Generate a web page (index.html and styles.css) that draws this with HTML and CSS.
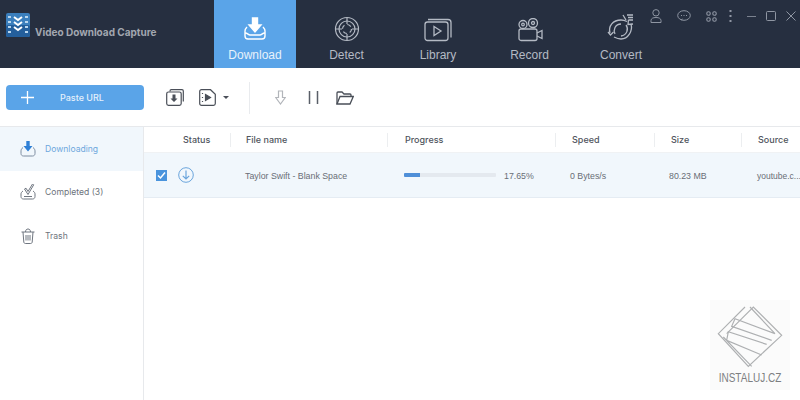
FILE: index.html
```html
<!DOCTYPE html>
<html lang="en">
<head>
<meta charset="utf-8">
<title>Video Download Capture</title>
<link rel="stylesheet" href="styles.css">
</head>
<body>
<div class="app">
  <header class="topbar">
    <div class="brand">
      <svg class="logo" width="24" height="24" viewBox="0 0 24 24">
        <rect x="0" y="0" width="24" height="24" rx="2" fill="#3b7fbd"/>
        <rect x="0" y="12" width="24" height="12" rx="2" fill="#245f9c"/>
        <path d="M2 4h3M2 9h3M2 14h3M2 19h3M19 4h3M19 9h3M19 14h3M19 19h3" stroke="#b9d6ee" stroke-width="2"/>
        <path d="M8 4l4 3 4-3M8 9l4 3 4-3M8 14l4 3 4-3" fill="none" stroke="#fff" stroke-width="2"/>
      </svg>
      <span class="brand-name">Video Download Capture</span>
    </div>
    <nav class="tabs">
      <div class="tab active">
        <svg width="26" height="26" viewBox="0 0 26 26" fill="none" stroke="#fff" stroke-width="1.4">
          <path d="M10.5 2h5v7h3.5l-6 7-6-7h3.500z" fill="#fff"/>
          <path d="M5 11c-1 1-2 2-2 4v5c0 2 1 3 3 3h14c2 0 3-1 3-3v-5c0-2-1-3-2-4"/>
          <path d="M3 17c3 0 3 2 5 2h10c2 0 2-2 5-2"/>
        </svg>
        <span>Download</span>
      </div>
      <div class="tab">
        <svg width="26" height="26" viewBox="0 0 26 26" fill="none" stroke="#b4bac4" stroke-width="1.2">
          <circle cx="13" cy="13" r="11.500"/>
          <circle cx="13" cy="13" r="8"/>
          <circle cx="13" cy="13" r="4.500" stroke-dasharray="4 3"/>
          <path d="M13 2v6M13 18v6M2 13h6M18 13h6"/>
        </svg>
        <span>Detect</span>
      </div>
      <div class="tab">
        <svg width="28" height="24" viewBox="0 0 28 24" fill="none" stroke="#b4bac4" stroke-width="1.300">
          <path d="M4 1.500h20c1.500 0 3 1 3 3v15"/>
          <rect x="1" y="4" width="23" height="18.500" rx="2.500"/>
          <path d="M10 8.500l7 4.500-7 4.500z"/>
        </svg>
        <span>Library</span>
      </div>
      <div class="tab">
        <svg width="26" height="24" viewBox="0 0 26 24" fill="none" stroke="#b4bac4" stroke-width="1.300">
          <circle cx="6" cy="6.500" r="4"/>
          <circle cx="6" cy="6.500" r="1.300"/>
          <circle cx="16" cy="5" r="4.500"/>
          <circle cx="16" cy="5" r="1.500"/>
          <rect x="2" y="11" width="18" height="11.500" rx="2"/>
          <path d="M20 15l5-2.500v8l-5-2.500"/>
        </svg>
        <span>Record</span>
      </div>
      <div class="tab">
        <svg width="28" height="28" viewBox="0 0 28 28" fill="none" stroke="#b4bac4" stroke-width="1.300">
          <path d="M3 19C1 12 6 6 14 6c2 0 4 .5 6 1.500"/>
          <path d="M24 10c2 7-3 15-10 15-3 0-5-1-7-2"/>
          <path d="M8 20c-2-4 0-10 6-10M19 11c3 4 1 10-5 11"/>
          <path d="M1 18l2.500 3 3-3M26 10l-5 .5.5-5"/>
          <path d="M16 1l3 5M20 1h6M21 3.500h5M22 6h4"/>
        </svg>
        <span>Convert</span>
      </div>
    </nav>
    <div class="window-controls">
      <svg width="12" height="14" viewBox="0 0 12 14" fill="none" stroke="#8f96a3" stroke-width="1"><circle cx="6" cy="3.800" r="3.200"/><path d="M1 13.500v-2C1 9.500 3 8.500 6 8.500s5 1 5 3v2z"/></svg>
      <svg class="ctl-chat" width="14" height="12" viewBox="0 0 14 12" fill="none" stroke="#8f96a3" stroke-width="1"><ellipse cx="7" cy="5.500" rx="6.300" ry="4.800"/><path d="M4 5.500h1M6.500 5.500h1M9 5.500h1M4 10l1.500-1"/></svg>
      <svg class="ctl-apps" width="11" height="11" viewBox="0 0 11 11" fill="none" stroke="#8f96a3" stroke-width="1.100"><rect x=".8" y=".8" width="3.400" height="3.400" rx="1.500"/><rect x="6.800" y=".8" width="3.400" height="3.400" rx="1.500"/><rect x=".8" y="6.800" width="3.400" height="3.400" rx="1.500"/><rect x="6.800" y="6.800" width="3.400" height="3.400" rx="1.500"/></svg>
      <svg class="ctl-more" width="3" height="12" viewBox="0 0 3 12" fill="#8f96a3"><rect x=".5" y="0" width="2" height="2"/><rect x=".5" y="5" width="2" height="2"/><rect x=".5" y="10" width="2" height="2"/></svg>
      <svg class="ctl-min" width="9" height="1" viewBox="0 0 9 1"><rect width="9" height="1" fill="#7b828f"/></svg>
      <svg class="ctl-max" width="10" height="10" viewBox="0 0 10 10" fill="none" stroke="#8f96a3"><rect x=".5" y=".5" width="9" height="9" rx="1"/></svg>
      <svg class="ctl-close" width="10" height="10" viewBox="0 0 10 10" fill="none" stroke="#8f96a3"><path d="M.5.500l9 9M9.500.500l-9 9"/></svg>
    </div>
  </header>

  <section class="toolbar">
    <button class="paste" type="button">
      <svg width="13" height="13" viewBox="0 0 13 13" stroke="#fff" stroke-width="1.300"><path d="M6.500 0v13M0 6.500h13"/></svg>
      <span>Paste URL</span>
    </button>
    <div class="tools-left">
      <svg width="18" height="17" viewBox="0 0 18 17" fill="none" stroke="#4a4f58" stroke-width="1.200">
        <path d="M4 2.500V2c0-.8.500-1.300 1.300-1.300H16c.8 0 1.300.5 1.300 1.300v10.500"/>
        <rect x=".7" y="3" width="14.500" height="13.300" rx="1.800"/>
        <path d="M6.500 5.500h3v4h2l-3.500 3.500-3.500-3.500h2z" fill="#4a4f58" stroke="none"/>
      </svg>
      <svg width="17" height="17" viewBox="0 0 17 17" fill="none" stroke="#4a4f58" stroke-width="1.200">
        <path d="M2.500.7h9l4.800 4.500v9.300c0 1-.8 1.800-1.800 1.800h-12c-1 0-1.800-.8-1.800-1.800V2.500c0-1 .8-1.800 1.800-1.800z"/>
        <path d="M6.500 5.500l5 3-5 3z" fill="#4a4f58"/>
        <path d="M3.500 4v1M3.500 8v1M3.500 12v1"/>
      </svg>
      <span class="caret"></span>
    </div>
    <div class="divider"></div>
    <div class="tools-right">
      <svg width="11" height="15" viewBox="0 0 11 15" fill="none" stroke="#b2b5ba" stroke-width="1.200"><path d="M3.500 1h4v6.500h2.800L5.500 14 .7 7.500h2.800z"/></svg>
      <svg class="pause" width="11" height="13" viewBox="0 0 11 13" stroke="#5a5f68" stroke-width="1.500"><path d="M1.500 0v13M9.500 0v13"/></svg>
      <svg class="folder" width="18" height="14" viewBox="0 0 18 14" fill="none" stroke="#4a4f58" stroke-width="1.300"><path d="M1 13V2c0-.6.400-1 1-1h4l2 2h6c.6 0 1 .4 1 1v1.500"/><path d="M1 13l3-7.500h13.300L14 13z"/></svg>
    </div>
  </section>

  <main class="content">
    <aside class="sidebar">
      <div class="side-item selected">
        <svg width="16" height="16" viewBox="0 0 16 16" fill="none" stroke="#7d8ca0" stroke-width="1"><path d="M6.300 0h3.400v5H12.500L8 10.500 3.500 5h2.800z" fill="#2f80d6" stroke="none"/><path d="M3 6.500C1.500 7.500 1 9 1 10v2.500C1 14 2 15 3.500 15h9c1.500 0 2.500-1 2.500-2.500V10c0-1-.5-2.500-2-3.500"/></svg>
        <span>Downloading</span>
      </div>
      <div class="side-item">
        <svg width="16" height="16" viewBox="0 0 16 16" fill="none" stroke="#6f7680" stroke-width="1"><path d="M4.500 5l1.500-.8L8 7.500 12.500 0l1.200.8L8 10.500z"/><path d="M3 7c-1.500 1-2 2-2 3v2.500C1 14 2 15 3.500 15h9c1.500 0 2.500-1 2.500-2.500V10c0-1-.5-2-2-3M4 12.500h8"/></svg>
        <span>Completed (3)</span>
      </div>
      <div class="side-item">
        <svg width="14" height="16" viewBox="0 0 14 16" fill="none" stroke="#6f7680" stroke-width="1"><path d="M.5 4h13M4.500 4C4.500 2 5.500 1 7 1s2.500 1 2.500 3M2 4l.8 10c0 .8.700 1.500 1.500 1.500h5.400c.8 0 1.500-.7 1.500-1.500L12 4M5 7v5.500M7 7v5.500M9 7v5.500"/></svg>
        <span>Trash</span>
      </div>
    </aside>
    <div class="table">
      <div class="thead">
        <div class="col col-status">Status</div>
        <div class="col col-name">File name</div>
        <div class="col col-progress">Progress</div>
        <div class="col col-speed">Speed</div>
        <div class="col col-size">Size</div>
        <div class="col col-source">Source</div>
      </div>
      <div class="trow">
        <div class="cell col-status">
          <span class="check"><svg width="9" height="9" viewBox="0 0 9 9" fill="none" stroke="#fff" stroke-width="1.500"><path d="M1 4.500l2.500 2.500L8 1.500"/></svg></span>
          <svg class="status-icon" width="16" height="16" viewBox="0 0 16 16" fill="none" stroke="#6ba5dc" stroke-width="1"><circle cx="8" cy="8" r="7.300"/><path d="M8 3.500v8.500M4.800 8.800L8 12l3.200-3.200" stroke-width="1.200"/></svg>
        </div>
        <div class="cell col-name text-cell">Taylor Swift - Blank Space</div>
        <div class="cell col-progress">
          <div class="bar"><div class="bar-fill" style="width:17.65%"></div></div>
          <span class="pct text-cell">17.65%</span>
        </div>
        <div class="cell col-speed text-cell">0 Bytes/s</div>
        <div class="cell col-size text-cell">80.23 MB</div>
        <div class="cell col-source text-cell">youtube.c...</div>
      </div>
    </div>
  </main>

  <div class="watermark">
    <svg width="70" height="66" viewBox="10 0 210 198" fill="none" stroke="#aeb0b2" stroke-width="3.500">
      <path d="M100 6L20 86l90 98 100-93-85-85-80 80"/>
      <path d="M115 6l75 80L70 41 60 64l120 42M165 118L50 80l-5 26 105 44M35 96l85 88"/>
    </svg>
    <span>INSTALUJ.CZ</span>
  </div>
</div>
</body>
</html>
```

FILE: styles.css
```css
* { box-sizing: border-box; }
html, body { margin: 0; padding: 0; }
body { width: 800px; height: 400px; overflow: hidden; background: #fff; font-family: "Liberation Sans", Arial, sans-serif; }
svg { display: block; flex: none; }
.app { position: relative; width: 800px; height: 400px; display: flex; flex-direction: column; }

.topbar { height: 68px; background: #262f40; display: flex; flex: none; }
.brand { width: 214px; padding: 13px 0 0 6px; display: flex; align-items: flex-start; }
.brand-name { font: 700 10px "Inter", sans-serif; color: #a2a7b0; margin: 13px 0 0 5px; white-space: nowrap; }
.tabs { display: flex; gap: 9.5px; }
.tab { width: 82px; height: 68px; display: flex; flex-direction: column; align-items: center; justify-content: flex-end; padding-bottom: 6px; color: #b4bac4; font-size: 12px; line-height: 14px; }
.tab svg { margin-bottom: 6px; }
.tab.active { background: #5aa4e8; color: #e8f2fb; }
.window-controls { position: absolute; top: 9px; right: 4px; height: 14px; display: flex; align-items: center; }
.ctl-chat { margin-left: 15px; }
.ctl-apps { margin-left: 15px; }
.ctl-more { margin-left: 12px; }
.ctl-min { margin-left: 15px; }
.ctl-max { margin-left: 10px; }
.ctl-close { margin-left: 10px; }

.toolbar { height: 59px; flex: none; display: flex; align-items: center; padding: 1px 0 0 6px; border-bottom: 1px solid #e7e9ec; }
.paste { width: 138px; height: 25px; border: 0; border-radius: 4px; background: #5aa4e8; color: #e4f0fb; display: flex; align-items: center; padding: 0 0 0 15px; font: 500 9px "Inter", sans-serif; }
.paste span { margin-left: 26px; }
.tools-left { display: flex; align-items: center; margin-left: 22px; }
.tools-left svg + svg { margin-left: 15px; }
.caret { width: 0; height: 0; border: 3px solid transparent; border-top: 3px solid #4a4f58; border-bottom: 0; margin-left: 7px; }
.divider { width: 1px; height: 32px; background: #e9ebee; margin-left: 20px; }
.tools-right { display: flex; align-items: center; margin-left: 25px; }
.pause { margin-left: 22px; }
.folder { margin-left: 17px; }

.content { flex: 1; display: flex; min-height: 0; }
.sidebar { width: 144px; flex: none; border-right: 1px solid #e7e9ec; }
.side-item { height: 43.5px; display: flex; align-items: center; padding-left: 20px; font: 400 8.6px "Inter", sans-serif; color: #6d737c; }
.side-item span { margin-left: 9px; }
.side-item:nth-child(3) svg { margin-left: 1px; margin-right: 1px; }
.side-item.selected { background: #f1f7fc; color: #6ea7dc; }

.table { flex: 1; min-width: 0; }
.thead { height: 26px; display: flex; align-items: center; font: 500 9px "Inter", sans-serif; color: #50555d; border-bottom: 1px solid #f0f2f4; }
.col { height: 14px; line-height: 14px; border-right: 1px solid #eceef0; white-space: nowrap; }
.col-status { width: 87px; padding-left: 39px; }
.col-name { width: 157px; padding-left: 15px; }
.col-progress { width: 168px; padding-left: 17px; }
.col-speed { width: 99px; padding-left: 16px; }
.col-size { width: 87px; padding-left: 16px; }
.col-source { width: 58px; padding-left: 16px; border-right: 0; }
.trow { height: 45px; display: flex; align-items: center; background: #f1f7fc; border-bottom: 1px solid #e5ecf3; font: 400 8.8px "Liberation Sans", sans-serif; color: #696e76; }
.cell { display: flex; align-items: center; white-space: nowrap; }
.text-cell { padding-top: 2px; }
.cell.col-status { padding-left: 12px; }
.check { width: 11px; height: 11px; background: #4a94dd; display: flex; align-items: center; justify-content: center; }
.status-icon { margin-left: 11px; }
.cell.col-name { padding-left: 14px; }
.cell.col-progress { padding-left: 16px; }
.cell.col-speed { padding-left: 14px; }
.cell.col-size { padding-left: 14px; }
.cell.col-source { padding-left: 15px; font-size: 8.500px; }
.bar { width: 92px; height: 4px; background: #e4e9ef; border-radius: 1px; overflow: hidden; }
.bar-fill { height: 100%; background: #4f8fd8; }
.pct { margin-left: 8px; }

.watermark { position: absolute; left: 710px; top: 300px; width: 80px; height: 90px; background: rgba(250,250,250,.8); display: flex; flex-direction: column; align-items: center; padding-top: 5px; color: #7d7f82; font-size: 10px; line-height: 13px; }
.watermark span { margin-top: 0; transform: scaleY(1.2); }
```
